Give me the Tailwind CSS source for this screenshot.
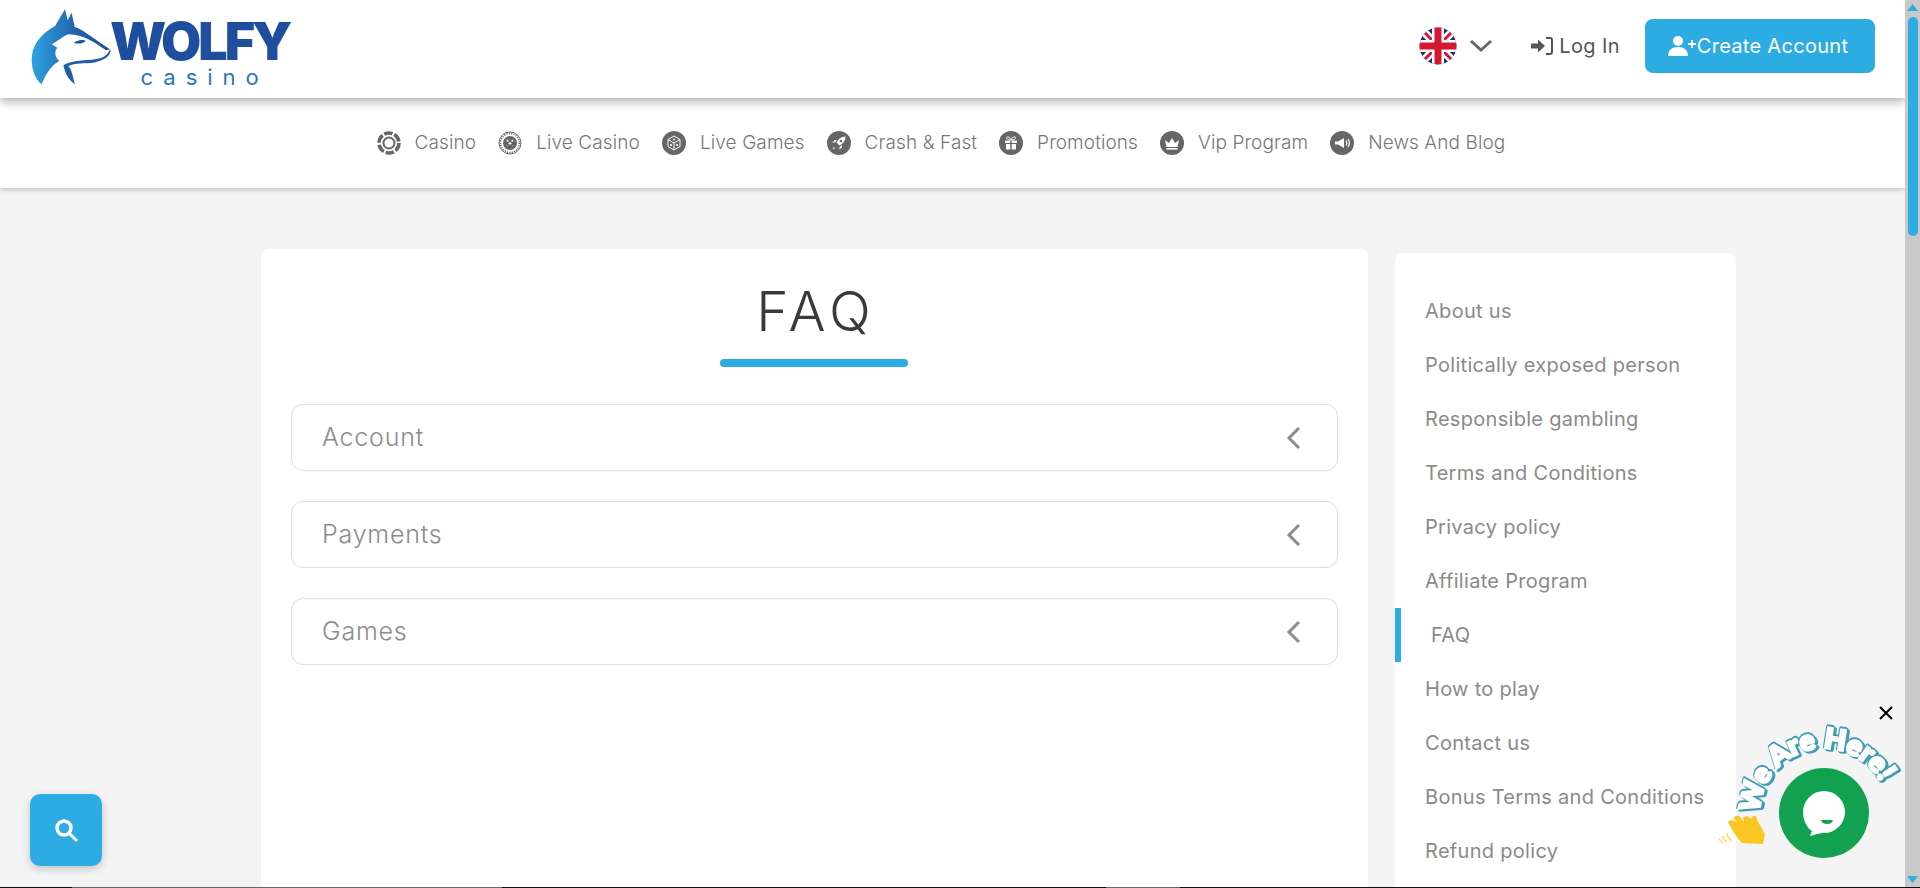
<!DOCTYPE html>
<html lang="en">
<head>
  <meta charset="UTF-8">
  <meta name="viewport" content="width=device-width, initial-scale=1.0">
  <script src="https://cdn.jsdelivr.net/npm/@tailwindcss/browser@4"></script>
  <title>FAQ - Wolfy Casino</title>
</head>
<body class="bg-[#f4f4f4] font-['Inter',sans-serif] h-screen overflow-hidden flex">
  <div class="w-[1905px] h-[888px] overflow-hidden shrink-0">
    <!-- top bar -->
    <header class="relative z-20 h-[98px] bg-white shadow-[0_3px_10px_rgba(0,0,0,0.35)] flex items-center justify-between pl-[30px] pr-[30px]">
      <a href="#" class="flex items-center">
        <svg width="82" height="80" viewBox="90 18 246 240" class="-mt-[4px] -mr-[2px]">
          <defs>
            <linearGradient id="wolfGrad" x1="0" y1="0" x2="1" y2="0">
              <stop offset="0" stop-color="#2fa3e2"/>
              <stop offset="0.6" stop-color="#1f5fa8"/>
              <stop offset="1" stop-color="#1c4f9c"/>
            </linearGradient>
          </defs>
          <path fill="url(#wolfGrad)" d="M195 25L203 58L215 35L224 78C250 85 290 120 330 145L318 148C290 128 250 100 205 100C190 105 175 120 155 130L172 140C162 150 165 170 178 180C150 195 135 225 125 250C105 235 95 205 95 175C95 135 120 100 165 75Z"/>
          <path fill="#1f5fa8" d="M190 193C220 175 270 180 300 172C315 168 325 158 330 145L332 150C328 170 305 180 280 185C255 188 225 185 205 195C215 205 218 225 225 250C205 238 195 215 190 193Z"/>
          <path fill="#1c4f9c" d="M222 125C235 115 250 115 258 120C248 128 232 130 222 125Z"/>
        </svg>
        <div class="pt-[9px] flex flex-col items-center leading-none">
          <span class="text-[52px] leading-[42px] font-black tracking-[-3px] text-[#1f4e9e]">WOLFY</span>
          <span class="mt-[4px] -mr-[10px] text-[22px] leading-[20px] tracking-[10px] text-[#2a78b8]">casino</span>
        </div>
      </a>
      <div class="flex items-center pb-[6px]">
        <svg width="38" height="38" viewBox="0 0 38 38">
          <defs><clipPath id="flagClip"><circle cx="19" cy="19" r="18.500"/></clipPath></defs>
          <g clip-path="url(#flagClip)">
            <rect width="38" height="38" fill="#1b2f7a"/>
            <path d="M0 0L38 38M38 0L0 38" stroke="#fff" stroke-width="8"/>
            <path d="M0 0L38 38M38 0L0 38" stroke="#d3182f" stroke-width="3"/>
            <path d="M19 0V38M0 19H38" stroke="#fff" stroke-width="12"/>
            <path d="M19 0V38M0 19H38" stroke="#d3182f" stroke-width="7"/>
          </g>
        </svg>
        <svg width="24" height="14" viewBox="0 0 24 14" class="ml-[12px]" fill="none" stroke="#666" stroke-width="3"><path d="M2 2l10 9 10-9"/></svg>
        <a href="#" class="ml-[38px] flex items-center text-[#555] text-[20px] tracking-[0.4px]">
          <svg width="22" height="18" viewBox="0 0 22 18" class="mr-[6px]" fill="#555">
            <path d="M0 6.500h7V2.500l7 6.500-7 6.500v-4H0z"/>
            <path d="M15 1h4a2 2 0 0 1 2 2v12a2 2 0 0 1-2 2h-4" fill="none" stroke="#555" stroke-width="2"/>
          </svg>
          Log In
        </a>
        <a href="#" class="ml-[25px] w-[230px] h-[54px] pr-[4px] bg-[#2dabe3] rounded-[8px] text-white text-[20px] tracking-[0.3px] flex items-center justify-center">
          <svg width="28" height="20" viewBox="0 0 28 20" fill="#fff" class="mr-[1px]">
            <circle cx="10" cy="5" r="5"/>
            <path d="M0 20c0-6 4-9 10-9s10 3 10 9z"/>
            <path d="M20 8h8M24 4v8" stroke="#fff" stroke-width="1.800"/>
          </svg>
          Create Account
        </a>
      </div>
    </header>

    <!-- games nav -->
    <nav class="relative z-10 h-[90px] pr-[23px] bg-white shadow-[0_1px_6px_rgba(0,0,0,0.25)] flex items-center justify-center gap-[22px] text-[#777] text-[19px] font-light tracking-[0.1px]">
      <a href="#" class="flex items-center gap-[14px]">
        <svg width="24" height="24" viewBox="0 0 24 24"><circle cx="12" cy="12" r="10" fill="none" stroke="#666" stroke-width="3.500" stroke-dasharray="8.500 1.970"/><circle cx="12" cy="12" r="5.500" fill="none" stroke="#666" stroke-width="2"/></svg>
        Casino
      </a>
      <a href="#" class="flex items-center gap-[14px]">
        <svg width="24" height="24" viewBox="0 0 24 24"><circle cx="12" cy="12" r="11" fill="none" stroke="#666" stroke-width="1"/><circle cx="12" cy="12" r="9.500" fill="none" stroke="#666" stroke-width="1.500" stroke-dasharray="1.200 1.200"/><circle cx="12" cy="12" r="7" fill="#666"/><path d="M9 9l6 6M15 9l-6 6" stroke="#fff" stroke-width="1.400" stroke-dasharray="2 2"/></svg>
        Live Casino
      </a>
      <a href="#" class="flex items-center gap-[14px]">
        <svg width="24" height="24" viewBox="0 0 24 24"><circle cx="12" cy="12" r="12" fill="#666"/><path d="M12 5l6 3.500v7L12 19l-6-3.500v-7z" fill="none" stroke="#fff" stroke-width="1"/><path d="M6 8.500l6 3.500 6-3.500M12 12v7" fill="none" stroke="#fff" stroke-width="1"/><circle cx="12" cy="8.500" r="1" fill="#fff"/><circle cx="9" cy="14" r="1" fill="#fff"/><circle cx="15" cy="14" r="1" fill="#fff"/></svg>
        Live Games
      </a>
      <a href="#" class="flex items-center gap-[14px]">
        <svg width="24" height="24" viewBox="0 0 24 24"><circle cx="12" cy="12" r="12" fill="#666"/><path d="M18.500 5.500c-4 0-7 2-9 6l3 3c4-2 6-5 6-9z" fill="#fff"/><path d="M8.500 11l-3 1 2-3h2.500zM13 15.500l-1 3 3-2v-2.500z" fill="#fff"/><path d="M8 16c-1 0-2 1-2.500 2.500C7 18 8 17 8 16z" fill="#fff"/><circle cx="14" cy="10" r="1.300" fill="#666"/></svg>
        Crash &amp; Fast
      </a>
      <a href="#" class="flex items-center gap-[14px]">
        <svg width="24" height="24" viewBox="0 0 24 24"><circle cx="12" cy="12" r="12" fill="#666"/><path d="M6 9.500h5.300v2.500H6zM12.700 9.500H18v2.500h-5.300zM7 13h4.300v5.500H7zM12.700 13H17v5.500h-4.300z" fill="#fff"/><path d="M12 9c-1-3-4-4-4.500-2.500S10 9 12 9zm0 0c1-3 4-4 4.500-2.500S14 9 12 9z" fill="none" stroke="#fff" stroke-width="1"/></svg>
        Promotions
      </a>
      <a href="#" class="flex items-center gap-[14px]">
        <svg width="24" height="24" viewBox="0 0 24 24"><circle cx="12" cy="12" r="12" fill="#666"/><path d="M5 9l4 3 3-5 3 5 4-3-1.500 7h-11z" fill="#fff"/><rect x="6.500" y="17" width="11" height="1.600" fill="#fff"/></svg>
        Vip Program
      </a>
      <a href="#" class="flex items-center gap-[14px]">
        <svg width="24" height="24" viewBox="0 0 24 24"><circle cx="12" cy="12" r="12" fill="#666"/><path d="M5 10.500h3l6-3.500v10l-6-3.500H5z" fill="#fff"/><path d="M16 9.500c1 1.500 1 3.500 0 5M18 8c1.800 2.500 1.800 5.500 0 8" fill="none" stroke="#fff" stroke-width="1.200"/></svg>
        News And Blog
      </a>
    </nav>

    <!-- page content -->
    <main class="flex items-start pl-[261px] pt-[61px]">
      <section class="w-[1107px] h-[700px] bg-white rounded-t-[8px] px-[30px] shrink-0">
        <h1 class="pt-[30px] pl-[3px] text-center text-[55px] leading-[64px] font-light text-[#3a3a3a] tracking-[5px]">FAQ</h1>
        <div class="mx-auto mt-[16px] w-[188px] h-[8px] rounded-full bg-[#2dabe3] -translate-x-[1px]"></div>
        <div class="mt-[37px] flex flex-col gap-[30px]">
          <div class="h-[67px] border border-[#dddddd] rounded-[12px] px-[30px] flex items-center justify-between text-[#8c8c8c] text-[25px] font-light tracking-[0.8px]">
            Account
            <svg width="16" height="24" viewBox="0 0 16 24" fill="none" stroke="#8c8c8c" stroke-width="3" class="mr-[5px]"><path d="M13 2L3 12l10 10"/></svg>
          </div>
          <div class="h-[67px] border border-[#dddddd] rounded-[12px] px-[30px] flex items-center justify-between text-[#8c8c8c] text-[25px] font-light tracking-[0.8px]">
            Payments
            <svg width="16" height="24" viewBox="0 0 16 24" fill="none" stroke="#8c8c8c" stroke-width="3" class="mr-[5px]"><path d="M13 2L3 12l10 10"/></svg>
          </div>
          <div class="h-[67px] border border-[#dddddd] rounded-[12px] px-[30px] flex items-center justify-between text-[#8c8c8c] text-[25px] font-light tracking-[0.8px]">
            Games
            <svg width="16" height="24" viewBox="0 0 16 24" fill="none" stroke="#8c8c8c" stroke-width="3" class="mr-[5px]"><path d="M13 2L3 12l10 10"/></svg>
          </div>
        </div>
      </section>

      <aside class="ml-[27px] mt-[4px] w-[341px] h-[700px] bg-white rounded-t-[8px] pt-[31px] shrink-0 text-[20px] text-[#8a8a8a] tracking-[0.3px]">
        <a href="#" class="h-[54px] px-[30px] flex items-center">About us</a>
        <a href="#" class="h-[54px] px-[30px] flex items-center">Politically exposed person</a>
        <a href="#" class="h-[54px] px-[30px] flex items-center">Responsible gambling</a>
        <a href="#" class="h-[54px] px-[30px] flex items-center">Terms and Conditions</a>
        <a href="#" class="h-[54px] px-[30px] flex items-center">Privacy policy</a>
        <a href="#" class="h-[54px] px-[30px] flex items-center">Affiliate Program</a>
        <a href="#" class="h-[54px] pl-[30px] border-l-[6px] border-[#2dabe3] flex items-center">FAQ</a>
        <a href="#" class="h-[54px] px-[30px] flex items-center">How to play</a>
        <a href="#" class="h-[54px] px-[30px] flex items-center">Contact us</a>
        <a href="#" class="h-[54px] px-[30px] flex items-center whitespace-nowrap">Bonus Terms and Conditions</a>
        <a href="#" class="h-[54px] px-[30px] flex items-center">Refund policy</a>
      </aside>
    </main>
  </div>

  <!-- browser scrollbar -->
  <div class="w-[15px] h-[887px] bg-[#c9c9c9] shrink-0 flex flex-col items-center">
    <svg width="11" height="7" viewBox="0 0 11 7" class="mt-[4px]"><path d="M5.500 0L11 7H0z" fill="#2dabe3"/></svg>
    <div class="mt-[6px] w-[10px] h-[219px] rounded-full bg-[#2dabe3]"></div>
    <svg width="11" height="7" viewBox="0 0 11 7" class="mt-auto mb-[4px]"><path d="M5.500 7L11 0H0z" fill="#2dabe3"/></svg>
  </div>

  <!-- floating search -->
  <button class="fixed left-[30px] top-[794px] w-[72px] h-[72px] rounded-[10px] bg-[#2dabe3] shadow-[0_3px_8px_rgba(0,0,0,0.2)] flex items-center justify-center z-30">
    <svg width="24" height="24" viewBox="0 0 24 24" fill="none" stroke="#fff" stroke-width="3.500"><circle cx="10" cy="10" r="7"/><path d="M15.500 15.500L22 22" stroke-linecap="round" stroke-width="3"/></svg>
  </button>

  <!-- chat widget -->
  <svg width="16" height="16" viewBox="0 0 16 16" class="fixed left-[1878px] top-[705px] z-30" fill="none" stroke="#000" stroke-width="2"><path d="M2 2l12 12M14 2L2 14"/></svg>
  <svg width="210" height="160" viewBox="0 0 210 160" class="fixed left-[1710px] top-[720px] z-30 overflow-visible">
    <defs><path id="hereArc" d="M50 93A64 64 0 0 1 175 73"/></defs>
    <text font-family="Lato, sans-serif" font-weight="900" font-size="28" fill="#fff" stroke="#fff" stroke-width="2.600" class="[filter:drop-shadow(2px_2px_0_#3f9cb5)_drop-shadow(-1px_-1px_0_#3f9cb5)_drop-shadow(1px_-1px_0_#3f9cb5)]"><textPath href="#hereArc">We Are Here!</textPath></text>
    <path fill="#f9c623" d="M18 102C20 99 24 100 27 103L24 98C25 95 29 95 31 98L34 102L33 98C35 95 39 96 41 99L43 96C46 95 47 97 47 100L55 114L53 124L32 123C26 117 22 110 18 102Z"/>
    <path d="M17 113c0 3 2 6 5 8M12 116c1 3 3 5 5 6M9 119c1 2 3 3 4 4" fill="none" stroke="#f9d65a" stroke-width="1.200"/>
  </svg>
  <button class="fixed left-[1779px] top-[768px] w-[90px] h-[90px] rounded-full bg-[#12a150] z-30 flex items-center justify-center">
    <svg width="44" height="46" viewBox="0 0 44 46"><path d="M22 1a21 21 0 0 1 0 42c-3 0-8 1-10 2l-4 1 2-5C5 38 1 30 1 22A21 21 0 0 1 22 1z" fill="#fff"/><path d="M19 30h12c-1 3-3 4-6 4s-5-1-6-4z" fill="#12a150"/></svg>
  </button>

  <!-- bottom edge -->
  <div class="fixed left-0 bottom-0 w-full h-[1px] bg-[#111] z-40 flex">
    <div class="ml-[72px] w-[430px] h-full bg-[#666]"></div>
    <div class="ml-[604px] w-[74px] h-full bg-[#666]"></div>
  </div>
</body>
</html>
